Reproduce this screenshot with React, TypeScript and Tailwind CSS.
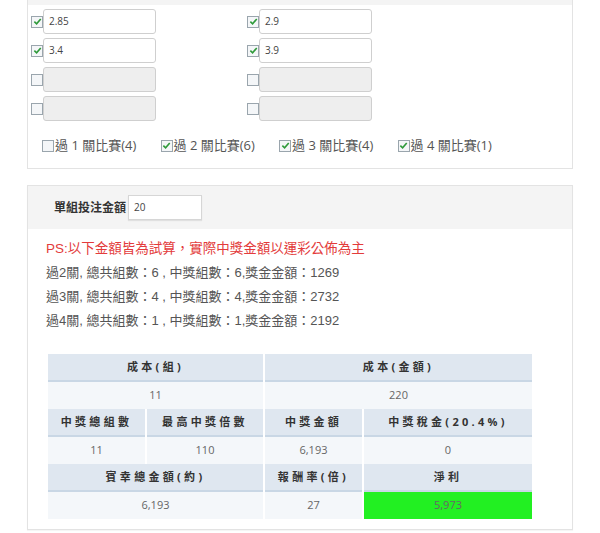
import React from 'react';

const FONT = { fontFamily: '"Open Sans", "Noto Sans CJK TC", sans-serif' };
const BODY = { fontFamily: '"Liberation Sans", "Noto Sans CJK TC", sans-serif' };

const Box: React.FC<{ checked?: boolean }> = ({ checked }) => (
  <span className="inline-flex h-[12px] w-[12px] shrink-0 items-center justify-center border border-[#9aa5ad] bg-[#f4f6f8]">
    {checked && (
      <svg width="9" height="9" viewBox="0 0 10 10">
        <path d="M1.5 5.2 L4 7.6 L8.6 2.2" fill="none" stroke="#2f9a3a" strokeWidth="1.8" />
      </svg>
    )}
  </span>
);

const OddsInput: React.FC<{ value?: string }> = ({ value }) => (
  <div className="flex items-center">
    <Box checked={!!value} />
    <div
      className={`flex h-[25px] w-[113px] items-center rounded-[3px] border border-[#cfcfcf] px-[5px] text-[10px] text-[#444] ${value ? 'bg-white' : 'bg-[#eeeeee]'}`}
    >
      {value}
    </div>
  </div>
);

const PARLAYS = [
  { n: 1, c: 4, on: false },
  { n: 2, c: 6, on: true },
  { n: 3, c: 4, on: true },
  { n: 4, c: 1, on: true },
];

const LINES = [
  '過2關, 總共組數：6 , 中獎組數：6,獎金金額：1269',
  '過3關, 總共組數：4 , 中獎組數：4,獎金金額：2732',
  '過4關, 總共組數：1 , 中獎組數：1,獎金金額：2192',
];

const Head: React.FC<{ span?: boolean; children: React.ReactNode }> = ({ span, children }) => (
  <div
    className={`flex h-[28px] items-center justify-center border-b-2 border-[#c9d7e5] bg-[#dfe7f0] text-[11px] font-bold tracking-[0.3em] text-[#333] ${span ? 'col-span-2' : ''}`}
  >
    {children}
  </div>
);

const Cell: React.FC<{ span?: boolean; green?: boolean; children: React.ReactNode }> = ({ span, green, children }) => (
  <div
    className={`flex h-[27px] items-center justify-center text-[11px] text-[#666] ${green ? 'bg-[#22f022]' : 'bg-[#f4f7fa]'} ${span ? 'col-span-2' : ''}`}
  >
    {children}
  </div>
);

export default function App() {
  return (
    <div className="h-[533px] w-[600px] overflow-hidden bg-white" style={FONT}>
      {/* odds panel */}
      <div className="mx-[27px] h-[169px] border border-t-0 border-[#e3e3e3]">
        <div className="h-[5px] bg-[#f4f4f4]" />
        <div className="flex pl-[3px] pt-[4px]">
          <div className="flex w-[216px] flex-col gap-[4px]">
            <OddsInput value="2.85" />
            <OddsInput value="3.4" />
            <OddsInput />
            <OddsInput />
          </div>
          <div className="flex flex-col gap-[4px]">
            <OddsInput value="2.9" />
            <OddsInput value="3.9" />
            <OddsInput />
            <OddsInput />
          </div>
        </div>
        <div className="mt-[15px] flex pl-[14px]">
          {PARLAYS.map(p => (
            <div key={p.n} className="flex w-[118.5px] items-center text-[13px] text-[#555]">
              <Box checked={p.on} />
              <span className="ml-[1px]">過 {p.n} 關比賽({p.c})</span>
            </div>
          ))}
        </div>
      </div>

      {/* result panel */}
      <div className="mx-[27px] mt-[16px] h-[345px] border border-[#e3e3e3] shadow-[0_1px_1px_rgba(0,0,0,0.04)]">
        <div className="flex h-[43px] items-center bg-[#f4f4f4] pl-[26px]">
          <span className="text-[12px] font-bold text-[#333]">單組投注金額</span>
          <div className="ml-[2px] flex h-[25px] w-[74px] items-center border border-[#d6d6d6] bg-white px-[5px] text-[10px] text-[#444] shadow-[0_1px_1px_rgba(0,0,0,0.08)]">
            20
          </div>
        </div>
        <div className="px-[18px] pt-[8px]" style={BODY}>
          <div className="text-[13.5px] leading-[24px] text-[#e33b3b]">PS:以下金額皆為試算，實際中獎金額以運彩公佈為主</div>
          {LINES.map(l => (
            <div key={l} className="text-[13px] leading-[24px] text-[#555]">{l}</div>
          ))}
          <div className="ml-[2px] mt-[21px] grid w-[484px] grid-cols-[97px_116px_97px_168px] gap-x-[2px]" style={FONT}>
            <Head span>成本(組)</Head>
            <Head span>成本(金額)</Head>
            <Cell span>11</Cell>
            <Cell span>220</Cell>
            <Head>中獎總組數</Head>
            <Head>最高中獎倍數</Head>
            <Head>中獎金額</Head>
            <Head>中獎稅金(20.4%)</Head>
            <Cell>11</Cell>
            <Cell>110</Cell>
            <Cell>6,193</Cell>
            <Cell>0</Cell>
            <Head span>賓幸總金額(約)</Head>
            <Head>報酬率(倍)</Head>
            <Head>淨利</Head>
            <Cell span>6,193</Cell>
            <Cell>27</Cell>
            <Cell green>5,973</Cell>
          </div>
        </div>
      </div>
    </div>
  );
}
